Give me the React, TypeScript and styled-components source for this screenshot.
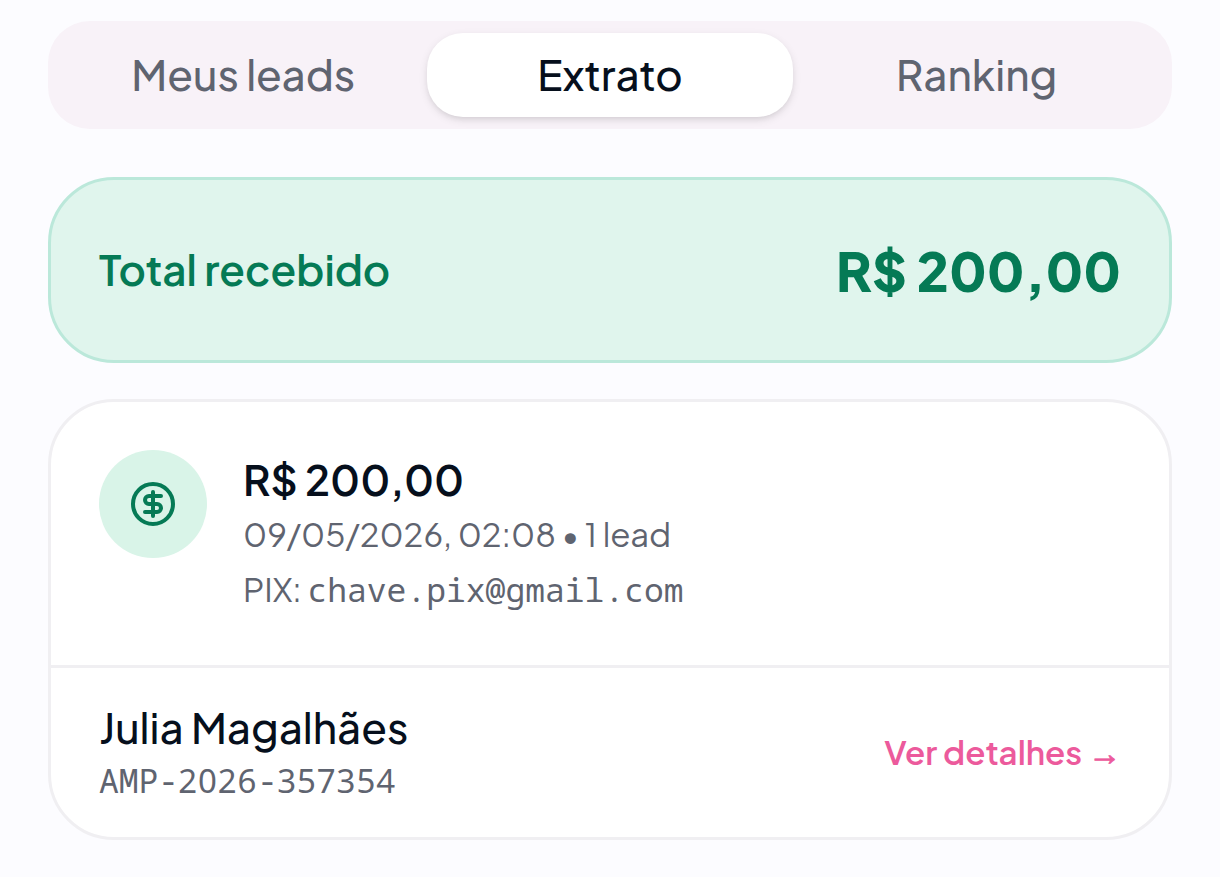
import React, { useState } from "react";
import styled, { createGlobalStyle } from "styled-components";
import { CircleDollarSign } from "lucide-react";

const colors = {
  background: "#fcfcff",
  surface: "#ffffff",
  tabs: "#f8f2f8",
  title: "#060f1c",
  paragraph: "#5f6470",
  green: "#057a55",
  greenSoft: "#e0f5ed",
  greenBorder: "#bbe8da",
  greenIcon: "#d9f4e8",
  border: "#f0eff2",
  pink: "#ec5a9c",
};

const fonts = {
  text: `"Plus Jakarta Sans", Inter, "Liberation Sans", sans-serif`,
  mono: `"Droid Sans Mono", "Noto Sans Mono", "DejaVu Sans Mono", monospace`,
};

const GlobalStyle = createGlobalStyle`
  * {
    box-sizing: border-box;
    margin: 0;
    padding: 0;
  }

  body {
    background: ${colors.background};
    color: ${colors.title};
    font-family: ${fonts.text};
  }
`;

const Container = styled.main`
  display: flex;
  flex-direction: column;
  height: 877px;
  overflow: hidden;
  padding: 21px 48px 0;
  width: 100%;
`;

const Tabs = styled.nav`
  background: ${colors.tabs};
  border-radius: 42px;
  display: grid;
  grid-template-columns: repeat(3, 1fr);
  height: 108px;
  padding: 12px;
`;

const Tab = styled.button<{ $active: boolean }>`
  background: ${({ $active }) => ($active ? colors.surface : "transparent")};
  border: none;
  border-radius: 36px;
  box-shadow: ${({ $active }) =>
    $active
      ? "0 3px 9px rgba(0, 0, 0, 0.1), 0 3px 6px -3px rgba(0, 0, 0, 0.1)"
      : "none"};
  color: ${({ $active }) => ($active ? colors.title : colors.paragraph)};
  font-family: inherit;
  font-size: 42px;
  font-weight: 500;
  line-height: 60px;
  padding-bottom: 2px;
`;

const Total = styled.section`
  align-items: center;
  background: ${colors.greenSoft};
  border: 3px solid ${colors.greenBorder};
  border-radius: 66px;
  color: ${colors.green};
  display: flex;
  height: 186px;
  justify-content: space-between;
  margin-top: 48px;
  padding: 0 48px;

  .label {
    font-size: 42px;
    font-weight: 600;
    padding-bottom: 3px;
  }

  .value {
    font-size: 54px;
    font-weight: 800;
  }
`;

const Card = styled.article`
  background: ${colors.surface};
  border: 3px solid ${colors.border};
  border-radius: 66px;
  height: 441px;
  margin-top: 36px;
`;

const Payment = styled.div`
  border-bottom: 3px solid ${colors.border};
  display: flex;
  gap: 36px;
  height: 266px;
  padding: 48px;
`;

const IconCircle = styled.div`
  align-items: center;
  background: ${colors.greenIcon};
  border-radius: 50%;
  color: ${colors.green};
  display: flex;
  flex-shrink: 0;
  height: 108px;
  justify-content: center;
  width: 108px;
`;

const Amount = styled.h2`
  font-size: 42px;
  font-weight: 600;
  line-height: 58px;
  padding-bottom: 2px;
`;

const Detail = styled.p`
  color: ${colors.paragraph};
  font-size: 33px;
  font-weight: 400;
  line-height: 48px;
  white-space: nowrap;

  & + & {
    margin-top: 7px;
  }
`;

const Mono = styled.span`
  font-family: ${fonts.mono};
  font-size: 33px;
  font-weight: 400;
`;

const Lead = styled.div`
  align-items: center;
  display: flex;
  height: 169px;
  justify-content: space-between;
  padding: 0 48px;
`;

const LeadInfo = styled.div`
  padding-bottom: 2px;
`;

const LeadName = styled.h3`
  font-size: 42px;
  font-weight: 500;
  line-height: 58px;
`;

const LeadCode = styled.p`
  color: ${colors.paragraph};
  font-family: ${fonts.mono};
  font-size: 33px;
  line-height: 48px;
  margin-top: 1px;
`;

// plain zeros, spaced out to the width of the mono cells
const Digits = styled.span`
  font-family: "Noto Sans", sans-serif;
  letter-spacing: 0.028em;
`;

const DetailsLink = styled.a`
  color: ${colors.pink};
  font-size: 33px;
  font-weight: 600;
  line-height: 48px;

  .arrow {
    display: inline-block;
    font-family: "Liberation Sans", sans-serif;
    font-size: 33px;
    text-align: center;
    width: 33px;
    -webkit-text-stroke: 0.9px ${colors.pink};
  }
`;

const tabs = ["Meus leads", "Extrato", "Ranking"];

const payment = {
  amount: "R$ 200,00",
  date: "09/05/2026, 02:08",
  leads: "1 lead",
  pix: "chave.pix@gmail.com",
  name: "Julia Magalhães",
  code: "AMP-2026-357354",
};

function App() {
  const [activeTab, setActiveTab] = useState("Extrato");

  return (
    <>
      <GlobalStyle />
      <Container>
        <Tabs>
          {tabs.map(tab => (
            <Tab
              key={tab}
              $active={tab === activeTab}
              onClick={() => setActiveTab(tab)}
            >
              {tab}
            </Tab>
          ))}
        </Tabs>
        <Total>
          <span className="label">Total recebido</span>
          <span className="value">{payment.amount}</span>
        </Total>
        <Card>
          <Payment>
            <IconCircle>
              <CircleDollarSign size={48} />
            </IconCircle>
            <div>
              <Amount>{payment.amount}</Amount>
              <Detail>
                {payment.date} • {payment.leads}
              </Detail>
              <Detail>
                PIX: <Mono>{payment.pix}</Mono>
              </Detail>
            </div>
          </Payment>
          <Lead>
            <LeadInfo>
              <LeadName>{payment.name}</LeadName>
              <LeadCode>
                {payment.code
                  .split(/(\d+)/)
                  .map((part, i) =>
                    /\d/.test(part) ? <Digits key={i}>{part}</Digits> : part
                  )}
              </LeadCode>
            </LeadInfo>
            <DetailsLink>
              Ver detalhes <span className="arrow">→</span>
            </DetailsLink>
          </Lead>
        </Card>
      </Container>
    </>
  );
}

export default App;
